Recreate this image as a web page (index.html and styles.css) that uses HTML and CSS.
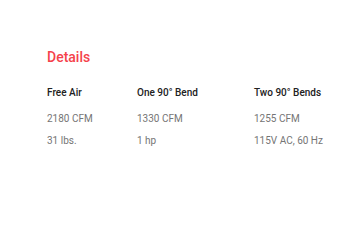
FILE: index.html
```html
<!DOCTYPE html>
<html>
<head>
<meta charset="utf-8">
<link rel="stylesheet" href="styles.css">
</head>
<body>
<section class="details">
  <h2 class="title">Details</h2>
  <div class="grid">
    <div class="head">Free Air</div>
    <div class="head">One 90° Bend</div>
    <div class="head">Two 90° Bends</div>
    <div class="val">2180 CFM</div>
    <div class="val">1330 CFM</div>
    <div class="val">1255 CFM</div>
    <div class="val">31 lbs.</div>
    <div class="val">1 hp</div>
    <div class="val">115V AC, 60 Hz</div>
  </div>
</section>
</body>
</html>
```
FILE: styles.css
```css
html, body {
  margin: 0;
  background: #fff;
}
body {
  font-family: Roboto, "Noto Sans", sans-serif;
}
.details {
  padding: 47px 0 0 47px;
}
.title {
  margin: 0;
  font-size: 14px;
  font-weight: 500;
  color: #f5424b;
  line-height: 21px;
}
.grid {
  margin-top: 18px;
  display: grid;
  grid-template-columns: 90px 117px auto;
  row-gap: 9px;
  font-size: 10px;
  line-height: 13px;
}
.head {
  font-weight: 500;
  color: #212121;
  margin-bottom: 4px;
}
.val {
  color: #757575;
}
```
